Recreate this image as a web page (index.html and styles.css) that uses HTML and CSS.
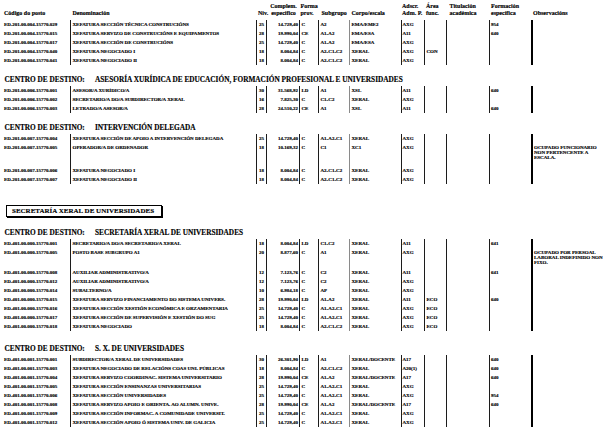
FILE: index.html
```html
<!DOCTYPE html>
<html lang="gl">
<head>
<meta charset="utf-8">
<title>Relación de postos</title>
<link rel="stylesheet" href="styles.css">
</head>
<body>
<div class="page">
  <div class="head">
    <span class="h-code">Código do posto</span>
    <span class="h-den">Denominación</span>
    <span class="h-niv">Nív.</span>
    <span class="h-com">Complem.<br>específico</span>
    <span class="h-for">Forma<br>prov.</span>
    <span class="h-sub">Subgrupo</span>
    <span class="h-cor">Corpo/escala</span>
    <span class="h-ads">Adscr.<br>Adm. P.</span>
    <span class="h-are">Área<br>func.</span>
    <span class="h-tit">Titulación<br>académica</span>
    <span class="h-fmc">Formación<br>específica</span>
    <span class="h-obs">Observacións</span>
  </div>

  <div class="block">
    <div class="row"><span class="c-code">ED.201.00.004.15770.029</span><span class="c-den">XEFATURA SECCIÓN TÉCNICA CONSTRUCIÓNS</span><span class="c-niv">25</span><span class="c-com">14.729,40</span><span class="c-for">C</span><span class="c-sub">A2</span><span class="c-cor">EMA/EME2</span><span class="c-ads">AXG</span><span class="c-are"></span><span class="c-tit"></span><span class="c-fmc">954</span><span class="c-obs"></span></div>
    <div class="row"><span class="c-code">ED.201.00.004.15770.015</span><span class="c-den">XEFATURA SERVIZO DE CONSTRUCIÓNS E EQUIPAMENTOS</span><span class="c-niv">28</span><span class="c-com">19.990,04</span><span class="c-for">CE</span><span class="c-sub">A1-A2</span><span class="c-cor">EMA/ESA</span><span class="c-ads">A11</span><span class="c-are"></span><span class="c-tit"></span><span class="c-fmc">640</span><span class="c-obs"></span></div>
    <div class="row"><span class="c-code">ED.201.00.004.15770.017</span><span class="c-den">XEFATURA SECCIÓN DE CONSTRUCIÓNS</span><span class="c-niv">25</span><span class="c-com">14.729,40</span><span class="c-for">C</span><span class="c-sub">A1-A2</span><span class="c-cor">EMA/ESA</span><span class="c-ads">AXG</span><span class="c-are"></span><span class="c-tit"></span><span class="c-fmc"></span><span class="c-obs"></span></div>
    <div class="row"><span class="c-code">ED.201.00.004.15770.040</span><span class="c-den">XEFATURA NEGOCIADO I</span><span class="c-niv">18</span><span class="c-com">8.004,84</span><span class="c-for">C</span><span class="c-sub">A2-C1-C2</span><span class="c-cor">XERAL</span><span class="c-ads">AXG</span><span class="c-are">CON</span><span class="c-tit"></span><span class="c-fmc"></span><span class="c-obs"></span></div>
    <div class="row"><span class="c-code">ED.201.00.004.15770.041</span><span class="c-den">XEFATURA NEGOCIADO II</span><span class="c-niv">18</span><span class="c-com">8.004,84</span><span class="c-for">C</span><span class="c-sub">A2-C1-C2</span><span class="c-cor">XERAL</span><span class="c-ads">AXG</span><span class="c-are"></span><span class="c-tit"></span><span class="c-fmc"></span><span class="c-obs"></span></div>
  </div>

  <div class="dest mt10"><span class="lbl">CENTRO DE DESTINO:</span><span class="ttl">ASESORÍA XURÍDICA DE EDUCACIÓN, FORMACIÓN PROFESIONAL E UNIVERSIDADES</span></div>
  <div class="block">
    <div class="row"><span class="c-code">ED.201.00.006.15770.001</span><span class="c-den">ASESOR/A XURÍDICO/A</span><span class="c-niv">30</span><span class="c-com">31.568,92</span><span class="c-for">LD</span><span class="c-sub">A1</span><span class="c-cor">XSL</span><span class="c-ads">A11</span><span class="c-are"></span><span class="c-tit"></span><span class="c-fmc">640</span><span class="c-obs"></span></div>
    <div class="row"><span class="c-code">ED.201.00.006.15770.002</span><span class="c-den">SECRETARIO/A DO/A SUBDIRECTOR/A XERAL</span><span class="c-niv">16</span><span class="c-com">7.825,30</span><span class="c-for">C</span><span class="c-sub">C1-C2</span><span class="c-cor">XERAL</span><span class="c-ads">AXG</span><span class="c-are"></span><span class="c-tit"></span><span class="c-fmc"></span><span class="c-obs"></span></div>
    <div class="row"><span class="c-code">ED.201.00.006.15770.003</span><span class="c-den">LETRADO/A ASESOR/A</span><span class="c-niv">28</span><span class="c-com">24.510,22</span><span class="c-for">CE</span><span class="c-sub">A1</span><span class="c-cor">XSL</span><span class="c-ads">A11</span><span class="c-are"></span><span class="c-tit"></span><span class="c-fmc">640</span><span class="c-obs"></span></div>
  </div>

  <div class="dest mt10"><span class="lbl">CENTRO DE DESTINO:</span><span class="ttl">INTERVENCIÓN DELEGADA</span></div>
  <div class="block">
    <div class="row"><span class="c-code">ED.201.00.007.15770.004</span><span class="c-den">XEFATURA SECCIÓN DE APOIO A INTERVENCIÓN DELEGADA</span><span class="c-niv">25</span><span class="c-com">14.729,40</span><span class="c-for">C</span><span class="c-sub">A1-A2-C1</span><span class="c-cor">XERAL</span><span class="c-ads">AXG</span><span class="c-are"></span><span class="c-tit"></span><span class="c-fmc"></span><span class="c-obs"></span></div>
    <div class="row tall23"><span class="c-code">ED.201.00.007.15770.005</span><span class="c-den">OPERADOR/A DE ORDENADOR</span><span class="c-niv">18</span><span class="c-com">10.169,32</span><span class="c-for">C</span><span class="c-sub">C1</span><span class="c-cor">XC1</span><span class="c-ads">AXG</span><span class="c-are"></span><span class="c-tit"></span><span class="c-fmc"></span><span class="c-obs"><span class="obs-text">OCUPADO FUNCIONARIO<br>NON PERTENCENTE A<br>ESCALA.</span></span></div>
    <div class="row"><span class="c-code">ED.201.00.007.15770.006</span><span class="c-den">XEFATURA NEGOCIADO I</span><span class="c-niv">18</span><span class="c-com">8.004,84</span><span class="c-for">C</span><span class="c-sub">A2-C1-C2</span><span class="c-cor">XERAL</span><span class="c-ads">AXG</span><span class="c-are"></span><span class="c-tit"></span><span class="c-fmc"></span><span class="c-obs"></span></div>
    <div class="row"><span class="c-code">ED.201.00.007.15770.007</span><span class="c-den">XEFATURA NEGOCIADO II</span><span class="c-niv">18</span><span class="c-com">8.004,84</span><span class="c-for">C</span><span class="c-sub">A2-C1-C2</span><span class="c-cor">XERAL</span><span class="c-ads">AXG</span><span class="c-are"></span><span class="c-tit"></span><span class="c-fmc"></span><span class="c-obs"></span></div>
  </div>

  <div class="unit">SECRETARÍA XERAL DE UNIVERSIDADES</div>

  <div class="dest mt11"><span class="lbl">CENTRO DE DESTINO:</span><span class="ttl">SECRETARÍA XERAL DE UNIVERSIDADES</span></div>
  <div class="block">
    <div class="row"><span class="c-code">ED.401.00.000.15770.001</span><span class="c-den">SECRETARIO/A DO/A SECRETARIO/A XERAL</span><span class="c-niv">18</span><span class="c-com">8.004,84</span><span class="c-for">LD</span><span class="c-sub">C1-C2</span><span class="c-cor">XERAL</span><span class="c-ads">A11</span><span class="c-are"></span><span class="c-tit"></span><span class="c-fmc">641</span><span class="c-obs"></span></div>
    <div class="row tall20"><span class="c-code">ED.401.00.000.15770.005</span><span class="c-den">POSTO BASE SUBGRUPO A1</span><span class="c-niv">20</span><span class="c-com">8.877,60</span><span class="c-for">C</span><span class="c-sub">A1</span><span class="c-cor">XERAL</span><span class="c-ads">AXG</span><span class="c-are"></span><span class="c-tit"></span><span class="c-fmc"></span><span class="c-obs"><span class="obs-text">OCUPADO POR PERSOAL<br>LABORAL INDEFINIDO NON<br>FIXO.</span></span></div>
    <div class="row"><span class="c-code">ED.401.00.000.15770.008</span><span class="c-den">AUXILIAR ADMINISTRATIVO/A</span><span class="c-niv">12</span><span class="c-com">7.123,76</span><span class="c-for">C</span><span class="c-sub">C2</span><span class="c-cor">XERAL</span><span class="c-ads">A11</span><span class="c-are"></span><span class="c-tit"></span><span class="c-fmc">641</span><span class="c-obs"></span></div>
    <div class="row"><span class="c-code">ED.401.00.000.15770.012</span><span class="c-den">AUXILIAR ADMINISTRATIVO/A</span><span class="c-niv">12</span><span class="c-com">7.123,76</span><span class="c-for">C</span><span class="c-sub">C2</span><span class="c-cor">XERAL</span><span class="c-ads">AXG</span><span class="c-are"></span><span class="c-tit"></span><span class="c-fmc"></span><span class="c-obs"></span></div>
    <div class="row"><span class="c-code">ED.401.00.000.15770.014</span><span class="c-den">SUBALTERNO/A</span><span class="c-niv">10</span><span class="c-com">6.984,18</span><span class="c-for">C</span><span class="c-sub">AP</span><span class="c-cor">XERAL</span><span class="c-ads">AXG</span><span class="c-are"></span><span class="c-tit"></span><span class="c-fmc"></span><span class="c-obs"></span></div>
    <div class="row"><span class="c-code">ED.401.00.000.15770.015</span><span class="c-den">XEFATURA SERVIZO FINANCIAMENTO DO SISTEMA UNIVERS.</span><span class="c-niv">28</span><span class="c-com">19.990,04</span><span class="c-for">LD</span><span class="c-sub">A1-A2</span><span class="c-cor">XERAL</span><span class="c-ads">A11</span><span class="c-are">ECO</span><span class="c-tit"></span><span class="c-fmc">640</span><span class="c-obs"></span></div>
    <div class="row"><span class="c-code">ED.401.00.000.15770.016</span><span class="c-den">XEFATURA SECCIÓN XESTIÓN ECONÓMICA E ORZAMENTARIA</span><span class="c-niv">25</span><span class="c-com">14.729,40</span><span class="c-for">C</span><span class="c-sub">A1-A2-C1</span><span class="c-cor">XERAL</span><span class="c-ads">AXG</span><span class="c-are">ECO</span><span class="c-tit"></span><span class="c-fmc"></span><span class="c-obs"></span></div>
    <div class="row"><span class="c-code">ED.401.00.000.15770.017</span><span class="c-den">XEFATURA SECCIÓN DE SUPERVISIÓN E XESTIÓN DO SUG</span><span class="c-niv">25</span><span class="c-com">14.729,40</span><span class="c-for">C</span><span class="c-sub">A1-A2-C1</span><span class="c-cor">XERAL</span><span class="c-ads">AXG</span><span class="c-are">ECO</span><span class="c-tit"></span><span class="c-fmc"></span><span class="c-obs"></span></div>
    <div class="row"><span class="c-code">ED.401.00.000.15770.018</span><span class="c-den">XEFATURA NEGOCIADO</span><span class="c-niv">18</span><span class="c-com">8.004,84</span><span class="c-for">C</span><span class="c-sub">A2-C1-C2</span><span class="c-cor">XERAL</span><span class="c-ads">AXG</span><span class="c-are">ECO</span><span class="c-tit"></span><span class="c-fmc"></span><span class="c-obs"></span></div>
  </div>

  <div class="dest mt13"><span class="lbl">CENTRO DE DESTINO:</span><span class="ttl">S. X. DE UNIVERSIDADES</span></div>
  <div class="block">
    <div class="row"><span class="c-code">ED.401.00.001.15770.001</span><span class="c-den">SUBDIRECTOR/A XERAL DE UNIVERSIDADES</span><span class="c-niv">30</span><span class="c-com">26.301,90</span><span class="c-for">LD</span><span class="c-sub">A1</span><span class="c-cor">XERAL/DOCENTE</span><span class="c-ads">A17</span><span class="c-are"></span><span class="c-tit"></span><span class="c-fmc">640</span><span class="c-obs"></span></div>
    <div class="row"><span class="c-code">ED.401.00.001.15770.003</span><span class="c-den">XEFATURA NEGOCIADO DE RELACIÓNS COAS UNI. PÚBLICAS</span><span class="c-niv">18</span><span class="c-com">8.004,84</span><span class="c-for">C</span><span class="c-sub">A2-C1-C2</span><span class="c-cor">XERAL</span><span class="c-ads">A20(1)</span><span class="c-are"></span><span class="c-tit"></span><span class="c-fmc">640</span><span class="c-obs"></span></div>
    <div class="row"><span class="c-code">ED.401.00.001.15770.004</span><span class="c-den">XEFATURA SERVIZO COORDINAC. SISTEMA UNIVERSITARIO</span><span class="c-niv">28</span><span class="c-com">19.990,04</span><span class="c-for">CE</span><span class="c-sub">A1-A2</span><span class="c-cor">XERAL/DOCENTE</span><span class="c-ads">A17</span><span class="c-are"></span><span class="c-tit"></span><span class="c-fmc">640</span><span class="c-obs"></span></div>
    <div class="row"><span class="c-code">ED.401.00.001.15770.005</span><span class="c-den">XEFATURA SECCIÓN ENSINANZAS UNIVERSITARIAS</span><span class="c-niv">25</span><span class="c-com">14.729,40</span><span class="c-for">C</span><span class="c-sub">A1-A2-C1</span><span class="c-cor">XERAL</span><span class="c-ads">AXG</span><span class="c-are"></span><span class="c-tit"></span><span class="c-fmc"></span><span class="c-obs"></span></div>
    <div class="row"><span class="c-code">ED.401.00.001.15770.006</span><span class="c-den">XEFATURA SECCIÓN UNIVERSIDADES</span><span class="c-niv">25</span><span class="c-com">14.729,40</span><span class="c-for">C</span><span class="c-sub">A1-A2-C1</span><span class="c-cor">XERAL</span><span class="c-ads">AXG</span><span class="c-are"></span><span class="c-tit"></span><span class="c-fmc">954</span><span class="c-obs"></span></div>
    <div class="row"><span class="c-code">ED.401.00.001.15770.008</span><span class="c-den">XEFATURA SERVIZO APOIO E ORIENTA. AO ALUMN. UNIVE.</span><span class="c-niv">28</span><span class="c-com">19.990,04</span><span class="c-for">CE</span><span class="c-sub">A1-A2</span><span class="c-cor">XERAL/DOCENTE</span><span class="c-ads">A17</span><span class="c-are"></span><span class="c-tit"></span><span class="c-fmc">640</span><span class="c-obs"></span></div>
    <div class="row"><span class="c-code">ED.401.00.001.15770.009</span><span class="c-den">XEFATURA SECCIÓN INFORMAC. A COMUNIDADE UNIVERSIT.</span><span class="c-niv">25</span><span class="c-com">14.729,40</span><span class="c-for">C</span><span class="c-sub">A1-A2-C1</span><span class="c-cor">XERAL</span><span class="c-ads">AXG</span><span class="c-are"></span><span class="c-tit"></span><span class="c-fmc"></span><span class="c-obs"></span></div>
    <div class="row"><span class="c-code">ED.401.00.001.15770.012</span><span class="c-den">XEFATURA SECCIÓN APOIO Ó SISTEMA UNIV. DE GALICIA</span><span class="c-niv">25</span><span class="c-com">14.729,40</span><span class="c-for">C</span><span class="c-sub">A1-A2-C1</span><span class="c-cor">XERAL</span><span class="c-ads">AXG</span><span class="c-are"></span><span class="c-tit"></span><span class="c-fmc"></span><span class="c-obs"></span></div>
  </div>
</div>
</body>
</html>
```

FILE: styles.css
```css
html, body {
  margin: 0;
  padding: 0;
  background: #ffffff;
}

.page {
  width: 616px;
  height: 439px;
  overflow: hidden;
  color: #000000;
  font-family: "Liberation Serif", "Times New Roman", serif;
  font-weight: bold;
  -webkit-text-stroke: 0.15px #000000;
}

/* column header */
.head {
  display: grid;
  grid-template-columns: 70px 186px 10px 33px 19px 31px 52px 23px 22px 43px 42px 85px;
  align-items: end;
  height: 16.5px;
  margin-bottom: 3px;
  font-size: 6px;
  line-height: 6.6px;
  white-space: nowrap;
}
.h-code { padding-left: 4px; }
.h-den { padding-left: 2.5px; }
.h-niv { padding-left: 2px; }
.h-com { text-align: center; padding-left: 2px; }
.h-for { padding-left: 1.5px; }
.h-sub { padding-left: 3.5px; }
.h-cor { padding-left: 2.5px; }
.h-ads { padding-left: 1px; }
.h-are { padding-left: 2px; }
.h-tit { padding-left: 3.5px; }
.h-fmc { padding-left: 2px; }
.h-obs { padding-left: 2px; }

/* data blocks */
.block {
  display: flex;
  flex-direction: column;
}

.row {
  display: grid;
  grid-template-columns: 70px 186px 10px 33px 19px 31px 52px 23px 22px 43px 42px 85px;
  height: 9px;
  font-size: 5px;
  line-height: 9px;
  white-space: nowrap;
}
.row.tall23 { height: 23px; }
.row.tall20 { height: 20px; }

.row > span {
  border-left: 1px solid #1c1c1c;
  overflow: visible;
}
.row > .c-code {
  border-left: none;
  padding-left: 4px;
}
.c-den { padding-left: 1.5px; }
.c-niv { text-align: center; }
.c-com { text-align: right; padding-right: 1px; }
.c-for { padding-left: 1.5px; }
.c-sub { padding-left: 1.5px; }
.row > .c-cor { padding-left: 1.5px; border-left-color: #8a8a8a; }
.c-ads { padding-left: 0.5px; }
.c-are { padding-left: 1.5px; }
.c-fmc { padding-left: 1px; }
.row > .c-obs {
  border-left: 2px solid #000000;
  padding-left: 1px;
}
.obs-text {
  display: block;
  padding-top: 2px;
  line-height: 5px;
}

/* centre headings */
.dest {
  height: 11px;
  line-height: 10px;
  padding-left: 4.5px;
  font-size: 7.3px;
  white-space: nowrap;
}
.dest .lbl {
  display: inline-block;
  width: 90.5px;
}
.mt10 { margin-top: 10px; }
.mt11 { margin-top: 11px; }
.mt13 { margin-top: 13px; }

/* boxed unit title */
.unit {
  box-sizing: border-box;
  width: 156px;
  height: 12px;
  margin: 21px 0 0 6px;
  padding-left: 5px;
  border: 1px solid #000000;
  box-shadow: 1px 1px 0 #000000;
  font-size: 7px;
  line-height: 10px;
  white-space: nowrap;
}
```
